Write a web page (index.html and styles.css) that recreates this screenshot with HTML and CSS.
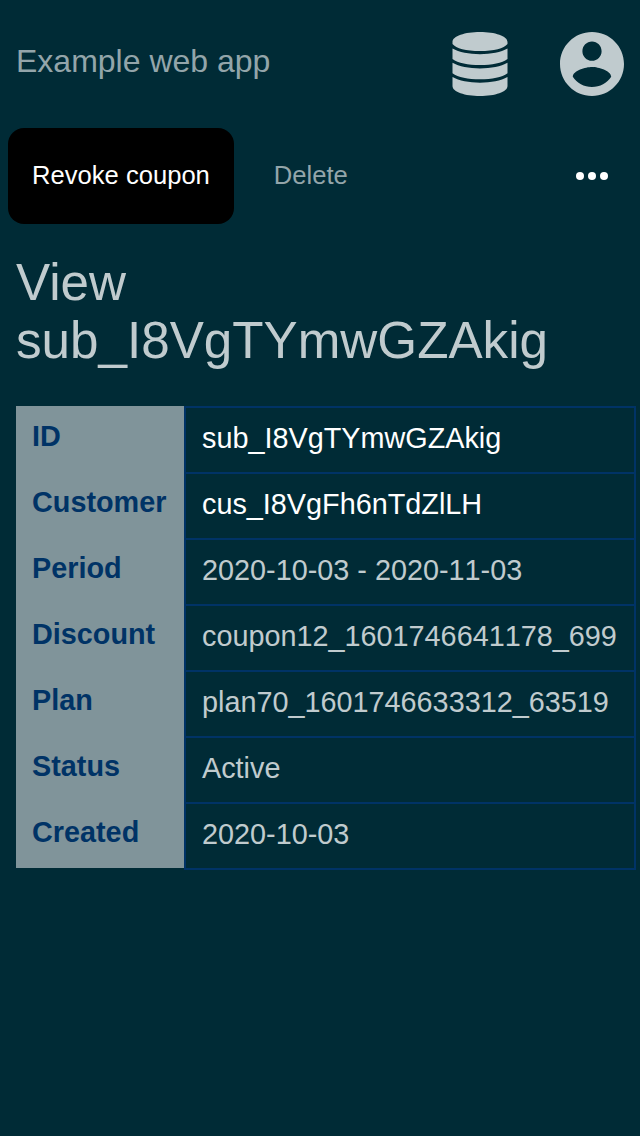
FILE: index.html
```html
<!DOCTYPE html>
<html lang="en">
<head>
<meta charset="utf-8">
<title>Example web app</title>
<link rel="stylesheet" href="styles.css">
</head>
<body>
<header class="header">
  <div class="brand">Example web app</div>
  <svg class="icon-db" viewBox="0 0 56 64"><path d="M.5 10C.5 4 13 0 28 0s27.500 4 27.500 10v2C52 16.500 42 19 28 19S4 16.500.5 12zM.5 16.500C7 20.200 17 22.200 28 22.200s21-2 27.500-5.700V27C50 31 40 33 28 33S6 31 .5 27zM.5 30.700C7 34.400 17 36.400 28 36.400s21-2 27.500-5.700v10.600c-5.500 4-15.500 6-27.500 6s-22-2-27.500-6zM.5 45C7 48.700 17 50.700 28 50.700s21-2 27.500-5.700v9C55.500 60 43 64 28 64S.5 60 .5 54z"/></svg>
  <svg class="icon-user" viewBox="2 2 20 20"><path d="M12 2C6.480 2 2 6.480 2 12s4.480 10 10 10 10-4.480 10-10S17.520 2 12 2zm0 3c1.660 0 3 1.340 3 3s-1.340 3-3 3-3-1.340-3-3 1.340-3 3-3zm0 14.200c-2.500 0-4.710-1.280-6-3.220.03-1.990 4-3.080 6-3.080 1.990 0 5.970 1.090 6 3.080-1.290 1.940-3.500 3.220-6 3.220z"/></svg>
</header>
<nav class="nav">
  <a class="nav-item active">Revoke coupon</a>
  <a class="nav-item">Delete</a>
  <svg class="more" viewBox="0 0 32 8"><circle cx="4" cy="4" r="4"/><circle cx="16" cy="4" r="4"/><circle cx="28" cy="4" r="4"/></svg>
</nav>
<main class="content">
  <h1 class="title">View sub_I8VgTYmwGZAkig</h1>
  <table class="details">
    <tr><th>ID</th><td class="link">sub_I8VgTYmwGZAkig</td></tr>
    <tr><th>Customer</th><td class="link">cus_I8VgFh6nTdZlLH</td></tr>
    <tr><th>Period</th><td>2020-10-03 - 2020-11-03</td></tr>
    <tr><th>Discount</th><td>coupon12_1601746641178_699</td></tr>
    <tr><th>Plan</th><td>plan70_1601746633312_63519</td></tr>
    <tr><th>Status</th><td>Active</td></tr>
    <tr><th>Created</th><td>2020-10-03</td></tr>
  </table>
</main>
</body>
</html>
```
FILE: styles.css
```css
body { margin: 0; min-height: 1136px; background: #002b36; color: #c0cbce; font-family: "Liberation Sans", Arial, sans-serif; overflow: hidden; }
.header { display: flex; align-items: center; height: 128px; padding: 0 16px; box-sizing: border-box; }
.brand { flex: 1; font-size: 32px; line-height: 36px; color: #93a5aa; padding-bottom: 7px; }
.icon-db { width: 56px; height: 64px; margin-right: 52px; fill: #c0cbce; }
.icon-user { width: 64px; height: 64px; fill: #c0cbce; }
.nav { display: flex; align-items: center; height: 96px; padding: 0 32px 0 8px; }
.nav-item { height: 96px; line-height: 95px; padding: 0 24px; margin-right: 16px; border-radius: 16px; font-size: 25.6px; color: #93a5aa; }
.nav-item.active { background: #000; color: #fff; }
.more { width: 32px; height: 8px; margin-left: auto; fill: #fff; }
.content { padding: 30px 0 0 16px; }
.title { margin: 0 0 36px; width: 560px; font-size: 51.2px; line-height: 58px; font-weight: 400; }
.details { border-collapse: separate; border-spacing: 0; width: 620px; font-size: 28.8px; line-height: 32px; }
.details th { box-sizing: border-box; width: 168px; height: 66px; padding: 0 16px 6px; background: #80949a; color: #036; text-align: left; }
.details td { position: relative; box-sizing: border-box; height: 66px; padding: 0 16px 4px; border: 2px solid #036; border-bottom: 0; white-space: nowrap; font-kerning: none; }
/* closing rule sits just below the label column */
.details tr:last-child td::after { content: ""; position: absolute; left: -2px; right: -2px; bottom: -2px; height: 2px; background: #036; }
.details .link { color: #fff; }
```
